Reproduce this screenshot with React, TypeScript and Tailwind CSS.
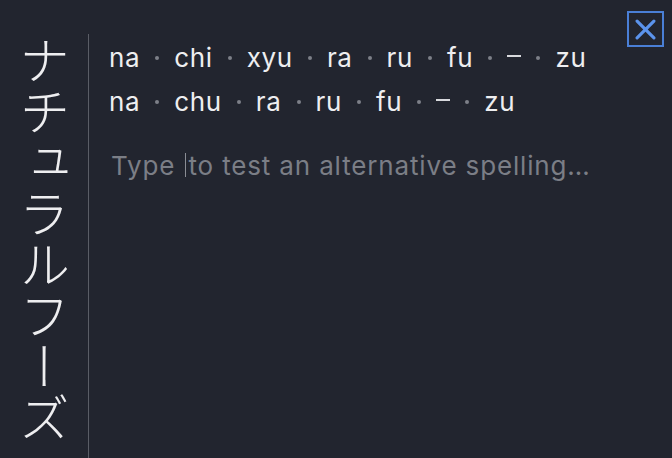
import React from 'react';

const Dot: React.FC = () => (
  <span className="mx-[15px] inline-block h-[4px] w-[4px] rounded-full bg-[#7d8088] align-middle" />
);

const Reading: React.FC<{ parts: string[] }> = ({ parts }) => (
  <div className="flex items-center leading-[44px] tracking-[0.65px]">
    {parts.map((p, i) => (
      <React.Fragment key={i}>
        {i > 0 && <Dot />}
        {p === '—' ? (
          <span className="mb-[4px] inline-block h-[2px] w-[14px] bg-[#d8d9dd]" />
        ) : (
          <span>{p}</span>
        )}
      </React.Fragment>
    ))}
  </div>
);

const App: React.FC = () => {
  return (
    <div className="relative flex h-[458px] w-[672px] overflow-hidden bg-[#22252f] text-[#eeeef0]">
      {/* word, written top to bottom */}
      <div className="flex w-[88px] justify-center pt-[35px]">
        <div
          className="text-[51px] font-light leading-none [text-orientation:upright] [writing-mode:vertical-rl]"
          style={{ fontFamily: '"Noto Sans CJK JP", "Noto Sans", sans-serif' }}
        >
          ナチュラルフーズ
        </div>
      </div>
      <div className="mt-[34px] w-px bg-[#5a5d66]" />

      <div className="flex-1 pl-[20px] pt-[36px] text-[26px]" style={{ fontFamily: 'Inter, "Liberation Sans", sans-serif' }}>
        <Reading parts={['na', 'chi', 'xyu', 'ra', 'ru', 'fu', '—', 'zu']} />
        <Reading parts={['na', 'chu', 'ra', 'ru', 'fu', '—', 'zu']} />

        <div className="mt-[20px] pl-[2px] leading-[44px] tracking-[0.85px] text-[#7b7e86]">
          Type{' '}
          <span className="relative inline-block w-[5px]">
            <span className="absolute left-[2px] -top-[22px] h-[24px] w-px bg-[#8a8d94]" />
          </span>
          to test an alternative spelling…
        </div>
      </div>

      <button className="absolute right-[8px] top-[11px] flex h-[36px] w-[37px] items-center justify-center border-2 border-[#4a7fd6]">
        <svg width="21" height="21" viewBox="0 0 20 20" fill="none" stroke="#5b93ec" strokeWidth="3" strokeLinecap="round">
          <path d="M2 2 L18 18 M18 2 L2 18" />
        </svg>
      </button>
    </div>
  );
};

export default App;
